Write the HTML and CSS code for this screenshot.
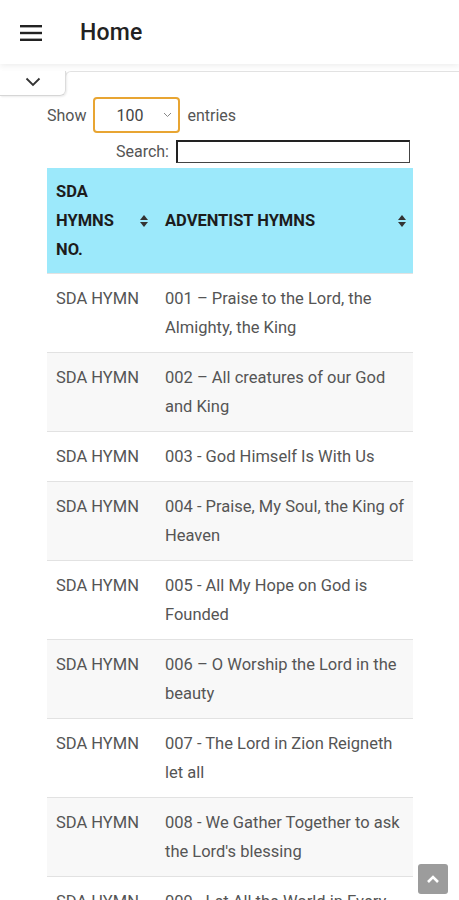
FILE: index.html
```html
<!DOCTYPE html>
<html lang="en">
<head>
<meta charset="utf-8">
<title>Home</title>
<link rel="stylesheet" href="styles.css">
</head>
<body>
<header class="appbar">
  <svg class="menu" width="22" height="18" viewBox="0 0 22 18" aria-hidden="true">
    <rect x="0" y="1" width="22" height="2.4" fill="#222"/>
    <rect x="0" y="7.8" width="22" height="2.4" fill="#222"/>
    <rect x="0" y="14.6" width="22" height="2.4" fill="#222"/>
  </svg>
  <h1 class="title">Home</h1>
</header>
<div class="tabrow">
  <div class="tab">
    <svg width="16" height="10" viewBox="0 0 16 10" aria-hidden="true">
      <path d="M1.5 1.5 L8 8 L14.5 1.5" fill="none" stroke="#333" stroke-width="1.8"/>
    </svg>
  </div>
  <div class="tabline"></div>
</div>
<main class="content">
  <div class="length">
    <span>Show</span>
    <div class="select">
      <span class="select-val">100</span>
      <svg class="select-arrow" width="9" height="6" viewBox="0 0 9 6" aria-hidden="true">
        <path d="M1 1 L4.5 4.5 L8 1" fill="none" stroke="#888" stroke-width="1"/>
      </svg>
    </div>
    <span>entries</span>
  </div>
  <div class="filter">
    <span>Search:</span>
    <div class="search"></div>
  </div>
  <table class="hymns">
    <colgroup><col class="c1"><col class="c2"></colgroup>
    <thead>
      <tr>
        <th class="h1">SDA<br>HYMNS<br>NO.<span class="sort"></span></th>
        <th class="h2">ADVENTIST HYMNS<span class="sort"></span></th>
      </tr>
    </thead>
    <tbody>
      <tr><td>SDA HYMN</td><td>001 – Praise to the Lord, the Almighty, the King</td></tr>
      <tr class="odd"><td>SDA HYMN</td><td>002 – All creatures of our God and King</td></tr>
      <tr><td>SDA HYMN</td><td>003 - God Himself Is With Us</td></tr>
      <tr class="odd"><td>SDA HYMN</td><td>004 - Praise, My Soul, the King of Heaven</td></tr>
      <tr><td>SDA HYMN</td><td>005 - All My Hope on God is Founded</td></tr>
      <tr class="odd"><td>SDA HYMN</td><td>006 – O Worship the Lord in the beauty</td></tr>
      <tr><td>SDA HYMN</td><td>007 - The Lord in Zion Reigneth let all</td></tr>
      <tr class="odd"><td>SDA HYMN</td><td>008 - We Gather Together to ask the Lord's blessing</td></tr>
      <tr><td>SDA HYMN</td><td>009 - Let All the World in Every Corner Sing</td></tr>
    </tbody>
  </table>
</main>
<a class="totop" href="#" aria-label="Back to top">
  <svg width="14" height="9" viewBox="0 0 14 9" aria-hidden="true">
    <path d="M2 7 L7 2 L12 7" fill="none" stroke="#fff" stroke-width="2.6"/>
  </svg>
</a>
</body>
</html>
```
FILE: styles.css
```css
html, body {
  margin: 0;
  padding: 0;
  background: #fff;
  font-family: Roboto, "Liberation Sans", Arial, sans-serif;
}

.appbar {
  height: 64px;
  display: flex;
  align-items: center;
  padding-left: 20px;
  background: #fff;
  box-shadow: 0 2px 6px rgba(0, 0, 0, 0.07);
  position: relative;
  z-index: 1;
}

.menu {
  display: block;
  margin-top: 1px;
}

.title {
  margin: 0 0 0 38px;
  font-size: 23px;
  font-weight: 500;
  color: #222;
  letter-spacing: 0.2px;
}

.tabrow {
  display: flex;
  margin-top: 7px;
  height: 26px;
}

.tab {
  width: 66px;
  height: 25px;
  border-right: 1px solid #dcdcdc;
  border-bottom: 1px solid #d6d6d6;
  border-bottom-right-radius: 6px;
  box-shadow: 1px 1px 2px rgba(0, 0, 0, 0.08);
  display: flex;
  align-items: center;
  justify-content: center;
  padding-bottom: 2px;
  box-sizing: border-box;
}

.tabline {
  flex: 1;
  height: 6px;
  border-top: 1px solid #e2e2e2;
  border-left: 1px solid #dcdcdc;
  border-top-left-radius: 6px;
  margin-left: -1px;
}

.content {
  padding: 0 46px 0 47px;
}

.length {
  display: flex;
  align-items: center;
  gap: 7px;
  font-size: 16px;
  color: #555;
  height: 36px;
}

.select {
  width: 87px;
  height: 36px;
  box-sizing: border-box;
  border: 2px solid #e8a532;
  border-radius: 4px;
  display: flex;
  align-items: center;
  position: relative;
}

.select-val {
  margin-left: 21px;
  color: #444;
}

.select-arrow {
  margin-left: auto;
  margin-right: 6px;
}

.filter {
  display: flex;
  align-items: center;
  justify-content: flex-end;
  gap: 7px;
  margin-top: 7px;
  padding-right: 3px;
  font-size: 16px;
  color: #555;
}

.search {
  width: 234px;
  height: 23px;
  box-sizing: border-box;
  border: 1px solid #444;
  border-top-width: 2px;
  border-left-width: 2px;
  border-top-color: #222;
  border-left-color: #222;
}

.hymns {
  margin-top: 5px;
  width: 100%;
  border-collapse: collapse;
  table-layout: fixed;
  font-size: 16.5px;
}

.c1 { width: 108px; }

.hymns th {
  background: #9ce9fb;
  color: #1c1c1c;
  font-weight: 700;
  text-align: left;
  line-height: 29px;
  padding: 9px 28px 9px 9px;
  position: relative;
  vertical-align: middle;
}

.hymns th.h2 {
  padding-left: 10px;
}

.sort {
  position: absolute;
  right: 7px;
  top: 50%;
  margin-top: -6px;
  width: 8px;
  height: 12px;
}

.sort::before,
.sort::after {
  content: "";
  position: absolute;
  left: 0;
  border-left: 4px solid transparent;
  border-right: 4px solid transparent;
}

.sort::before {
  top: 0;
  border-bottom: 5px solid #333;
}

.sort::after {
  bottom: 0;
  border-top: 5px solid #333;
}

.hymns td {
  color: #555;
  line-height: 29px;
  padding: 10px 5px 10px 10px;
  border-top: 1px solid #e2e2e2;
  vertical-align: top;
}

.hymns td:first-child {
  padding-left: 9px;
  white-space: nowrap;
}

.hymns tr.odd td {
  background: #f8f8f8;
}

.totop {
  position: fixed;
  right: 11px;
  bottom: 6px;
  width: 30px;
  height: 30px;
  border-radius: 3px;
  background: #9c9c9c;
  display: flex;
  align-items: center;
  justify-content: center;
}
```
